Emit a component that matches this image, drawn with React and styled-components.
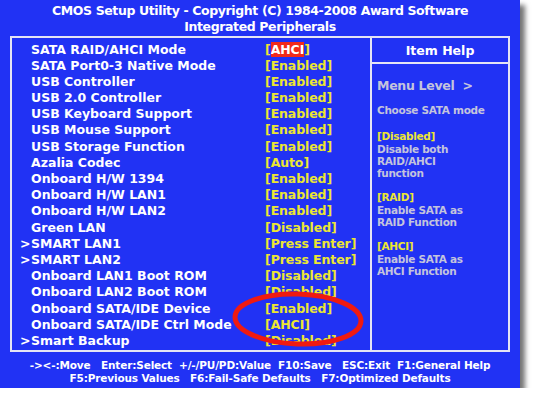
import React from "react";
import styled, { createGlobalStyle } from "styled-components";

const Global = createGlobalStyle`
  html, body { margin: 0; padding: 0; background: #ffffff; }
  body { font-family: "DejaVu Sans", Verdana, sans-serif; }
`;

const Screen = styled.div`
  position: relative;
  width: 520px;
  height: 388px;
  background: #2132f4;
  box-shadow: 5px 5px 5px rgba(0, 0, 0, 0.55);
  display: flex;
  flex-direction: column;
  font-weight: bold;
  color: #ffffff;
`;

const Title = styled.header`
  height: 36px;
  display: flex;
  flex-direction: column;
  align-items: center;
  justify-content: center;
  font-size: 12.5px;
  line-height: 16px;
  letter-spacing: -0.38px;
  padding-top: 2px;
  box-sizing: border-box;
`;

const Frame = styled.div`
  margin: 0 10px;
  height: 316px;
  box-sizing: border-box;
  border: 2px solid #e4e4f4;
  display: grid;
  grid-template-columns: 358px 1fr;
`;

const Menu = styled.div`
  padding-top: 3.5px;
  padding-left: 8px;
`;

const Row = styled.div`
  display: grid;
  grid-template-columns: 11px 234px auto;
  height: 16.2px;
  line-height: 16.2px;
  font-size: 12.5px;
  white-space: nowrap;
`;

const Arrow = styled.span`
  color: #ffffff;
`;

const Label = styled.span`
  color: #ffffff;
`;

const Value = styled.span`
  color: #ece632;
  letter-spacing: -0.1px;
`;

const Selected = styled.span`
  background: #f22a1a;
  color: #ffffff;
`;

const Help = styled.aside`
  border-left: 2px solid #e4e4f4;
  display: flex;
  flex-direction: column;
`;

const HelpHead = styled.div`
  height: 24px;
  border-bottom: 2px solid #e4e4f4;
  display: flex;
  align-items: center;
  justify-content: center;
  font-size: 12.5px;
`;

const HelpBody = styled.div`
  padding: 14px 0 0 5px;
  color: #c4c4dc;
`;

const Level = styled.div`
  font-size: 12.5px;
  line-height: 16px;
  letter-spacing: -0.3px;
  margin-bottom: 10px;
`;

const HelpText = styled.div`
  font-size: 10.5px;
  line-height: 12.3px;
  letter-spacing: -0.3px;
  margin-bottom: ${(p) => p.$gap || 0}px;
`;

const HelpKey = styled(HelpText)`
  color: #ece632;
`;

const Keys = styled.footer`
  flex: 1;
  display: flex;
  flex-direction: column;
  align-items: center;
  justify-content: center;
  padding-top: 4px;
  font-size: 10.5px;
  line-height: 13px;
  letter-spacing: -0.15px;
  white-space: pre;
`;

const Ring = styled.svg`
  position: absolute;
  left: 228px;
  top: 288px;
`;

const items = [
  ["", "SATA RAID/AHCI Mode", "AHCI", true],
  ["", "SATA Port0-3 Native Mode", "Enabled"],
  ["", "USB Controller", "Enabled"],
  ["", "USB 2.0 Controller", "Enabled"],
  ["", "USB Keyboard Support", "Enabled"],
  ["", "USB Mouse Support", "Enabled"],
  ["", "USB Storage Function", "Enabled"],
  ["", "Azalia Codec", "Auto"],
  ["", "Onboard H/W 1394", "Enabled"],
  ["", "Onboard H/W LAN1", "Enabled"],
  ["", "Onboard H/W LAN2", "Enabled"],
  ["", "Green LAN", "Disabled"],
  [">", "SMART LAN1", "Press Enter"],
  [">", "SMART LAN2", "Press Enter"],
  ["", "Onboard LAN1 Boot ROM", "Disabled"],
  ["", "Onboard LAN2 Boot ROM", "Disabled"],
  ["", "Onboard SATA/IDE Device", "Enabled"],
  ["", "Onboard SATA/IDE Ctrl Mode", "AHCI"],
  [">", "Smart Backup", "Disabled"],
];

export default function App() {
  return (
    <>
      <Global />
      <Screen>
        <Title>
          <div>CMOS Setup Utility - Copyright (C) 1984-2008 Award Software</div>
          <div>Integrated Peripherals</div>
        </Title>
        <Frame>
          <Menu>
            {items.map(([arrow, label, value, sel]) => (
              <Row key={label}>
                <Arrow>{arrow}</Arrow>
                <Label>{label}</Label>
                <Value>
                  [{sel ? <Selected>{value}</Selected> : value}]
                </Value>
              </Row>
            ))}
          </Menu>
          <Help>
            <HelpHead>Item Help</HelpHead>
            <HelpBody>
              <Level>Menu Level&nbsp;&nbsp;&gt;</Level>
              <HelpText $gap={14}>Choose SATA mode</HelpText>
              <HelpKey>[Disabled]</HelpKey>
              <HelpText>Disable both</HelpText>
              <HelpText>RAID/AHCI</HelpText>
              <HelpText $gap={12}>function</HelpText>
              <HelpKey>[RAID]</HelpKey>
              <HelpText>Enable SATA as</HelpText>
              <HelpText $gap={12}>RAID Function</HelpText>
              <HelpKey>[AHCI]</HelpKey>
              <HelpText>Enable SATA as</HelpText>
              <HelpText>AHCI Function</HelpText>
            </HelpBody>
          </Help>
        </Frame>
        <Keys>
          <div>{"-><-:Move   Enter:Select  +/-/PU/PD:Value  F10:Save   ESC:Exit  F1:General Help"}</div>
          <div>{"F5:Previous Values   F6:Fail-Safe Defaults   F7:Optimized Defaults"}</div>
        </Keys>
        <Ring width="140" height="64" viewBox="0 0 140 64">
          <ellipse
            cx="70"
            cy="31"
            rx="63"
            ry="25"
            fill="none"
            stroke="#f01a10"
            strokeWidth="5"
            transform="rotate(2 70 31)"
          />
        </Ring>
      </Screen>
    </>
  );
}
